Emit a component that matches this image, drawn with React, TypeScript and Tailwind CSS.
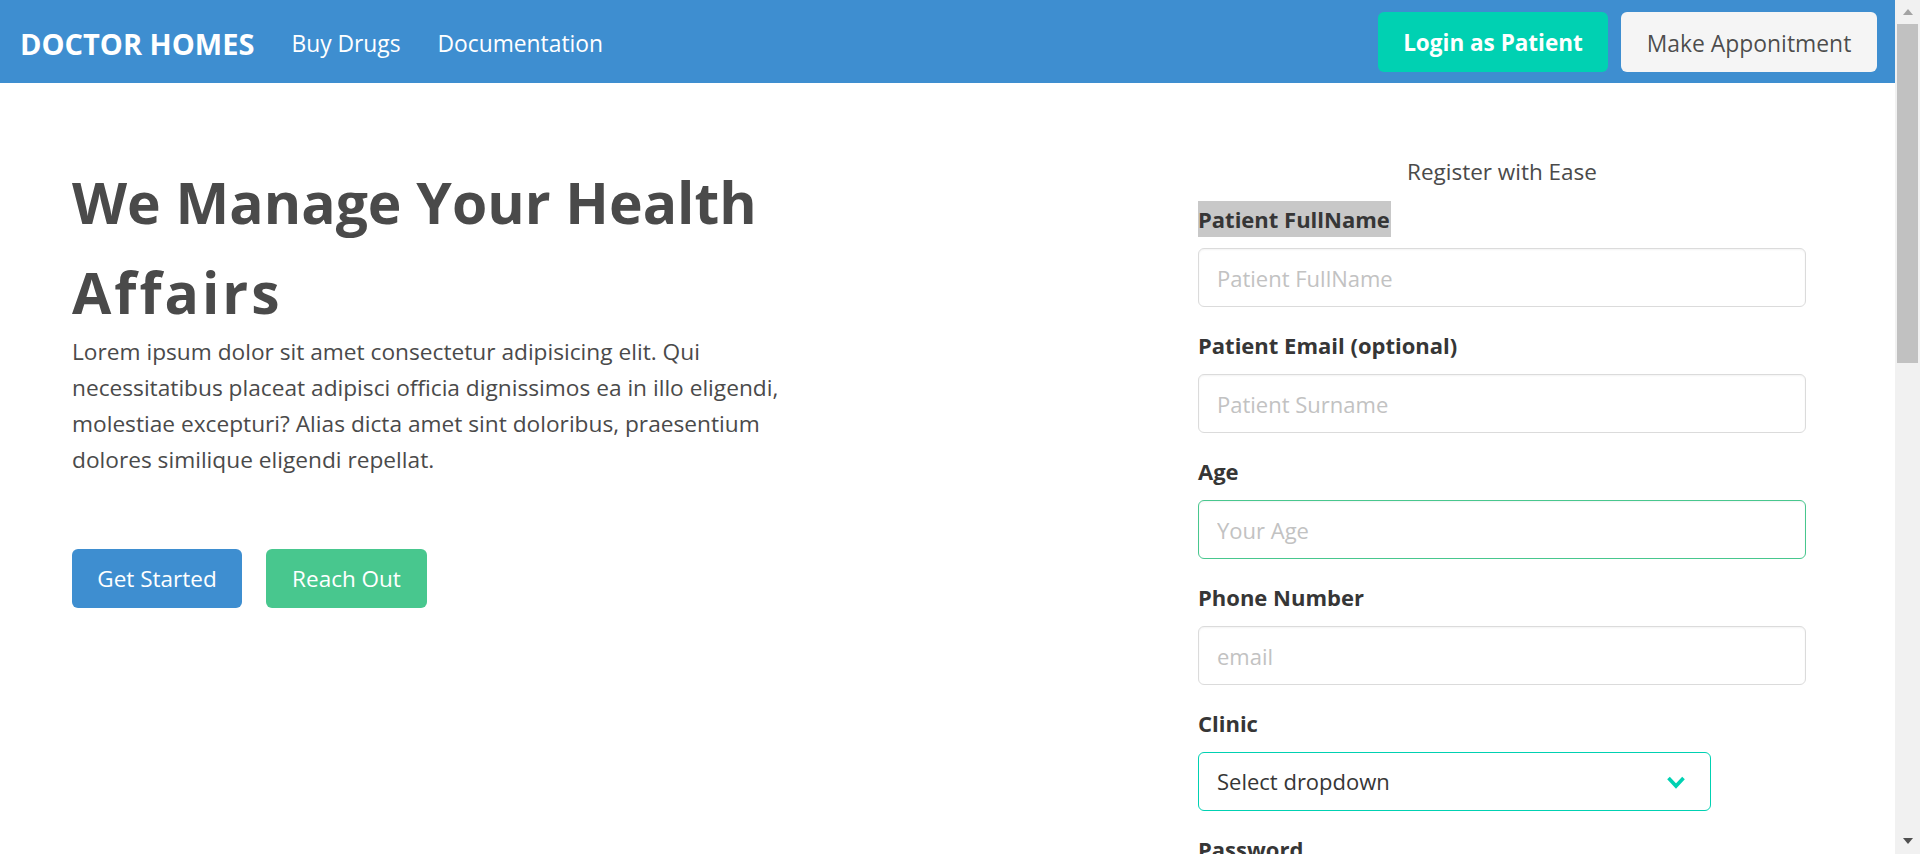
import React from "react";

const font = { fontFamily: '"Open Sans", "Noto Sans", sans-serif' };

function Field({
  label,
  placeholder,
  highlight,
  borderClass,
}: {
  label: string;
  placeholder: string;
  highlight?: boolean;
  borderClass?: string;
}) {
  return (
    <div className="mb-[20px]">
      <label className="block h-[36px] text-[22px] font-bold leading-[36px] text-[#363636]">
        <span className={highlight ? "inline-block bg-[#c8c8c8] pr-[1px]" : "inline-block"}>{label}</span>
      </label>
      <input
        placeholder={placeholder}
        className={
          "mt-[11px] block h-[59px] w-full rounded-[6px] border bg-white px-[18px] text-[22px] text-[#363636] shadow-[inset_0_1px_2px_rgba(10,10,10,0.05)] outline-none placeholder:text-[#c2c2c2] " +
          (borderClass ?? "border-[#dbdbdb]")
        }
      />
    </div>
  );
}

function Scrollbar() {
  return (
    <aside className="flex h-screen w-[25px] shrink-0 flex-col bg-[#f1f1f1]">
      <div className="flex h-[24px] items-center justify-center">
        <svg width="10" height="6" viewBox="0 0 10 6">
          <polygon points="0,6 5,0 10,6" fill="#a3a3a3" />
        </svg>
      </div>
      <div className="mx-[2px] h-[339px] bg-[#c1c1c1]" />
      <div className="flex-1" />
      <div className="flex h-[26px] items-center justify-center">
        <svg width="10" height="6" viewBox="0 0 10 6">
          <polygon points="0,0 10,0 5,6" fill="#505050" />
        </svg>
      </div>
    </aside>
  );
}

export default function App() {
  return (
    <div style={font} className="flex h-screen overflow-hidden bg-white">
      <main className="min-w-0 flex-1">
        <nav className="flex h-[83px] items-center bg-[#3e8ed0] pl-[20px] pr-[18px]">
          <a className="pt-[3px] text-[29px] font-bold leading-none text-white">DOCTOR HOMES</a>
          <a className="ml-[37px] pt-[6px] text-[22.8px] leading-none text-white">Buy Drugs</a>
          <a className="ml-[37px] pt-[6px] text-[22.8px] leading-none text-white">Documentation</a>
          <div className="ml-auto flex items-center gap-[13px]">
            <button className="flex h-[60px] w-[230px] items-center justify-center rounded-[6px] bg-[#00d1b2] pt-[3px] text-[22.5px] font-bold text-white">
              Login as Patient
            </button>
            <button className="flex h-[60px] w-[256px] items-center justify-center rounded-[6px] bg-[#f5f5f5] pt-[6px] text-[22.9px] text-[rgba(0,0,0,0.7)]">
              Make Apponitment
            </button>
          </div>
        </nav>

        <section className="flex pl-[72px] pt-[74px]">
          <div className="flex-1">
            <h1 className="whitespace-nowrap text-[57px] font-bold leading-[90px] text-[#4a4a4a]">
              We Manage Your Health
              <br />
              <span className="tracking-[3px]">Affairs</span>
            </h1>
            <p className="-mt-[3px] whitespace-nowrap text-[22.7px] leading-[36px] text-[#4a4a4a]">
              Lorem ipsum dolor sit amet consectetur adipisicing elit. Qui
              <br />
              necessitatibus placeat adipisci officia dignissimos ea in illo eligendi,
              <br />
              molestiae excepturi? Alias dicta amet sint doloribus, praesentium
              <br />
              dolores similique eligendi repellat.
            </p>
            <div className="mt-[71px] flex gap-[24px]">
              <button className="flex h-[59px] w-[170px] items-center justify-center rounded-[6px] bg-[#3e8ed0] text-[22.5px] text-white">
                Get Started
              </button>
              <button className="flex h-[59px] w-[161px] items-center justify-center rounded-[6px] bg-[#48c78e] text-[22.5px] text-white">
                Reach Out
              </button>
            </div>
          </div>

          <form className="mr-[89px] w-[608px] shrink-0">
            <h2 className="h-[30px] text-center text-[22.5px] leading-[30px] text-[#4a4a4a]">Register with Ease</h2>
            <div className="mt-[14px]">
              <Field label="Patient FullName" placeholder="Patient FullName" highlight />
              <Field label="Patient Email (optional)" placeholder="Patient Surname" />
              <Field label="Age" placeholder="Your Age" borderClass="border-[#48c78e]" />
              <Field label="Phone Number" placeholder="email" />
              <div className="mb-[20px]">
                <label className="block h-[36px] text-[22px] font-bold leading-[36px] text-[#363636]">Clinic</label>
                <div className="relative mt-[11px] flex h-[59px] w-[513px] items-center rounded-[6px] border border-[#00d1b2] bg-white px-[18px] text-[22px] text-[#363636]">
                  <span>Select dropdown</span>
                  <svg
                    className="absolute right-[24px] top-1/2 -translate-y-1/2"
                    width="20"
                    height="14"
                    viewBox="0 0 20 14"
                    fill="none"
                  >
                    <polyline points="2.5,3 10,11 17.5,3" stroke="#00d1b2" strokeWidth="3.6" strokeLinejoin="miter" />
                  </svg>
                </div>
              </div>
              <Field label="Password" placeholder="Password" />
            </div>
          </form>
        </section>
      </main>
      <Scrollbar />
    </div>
  );
}
